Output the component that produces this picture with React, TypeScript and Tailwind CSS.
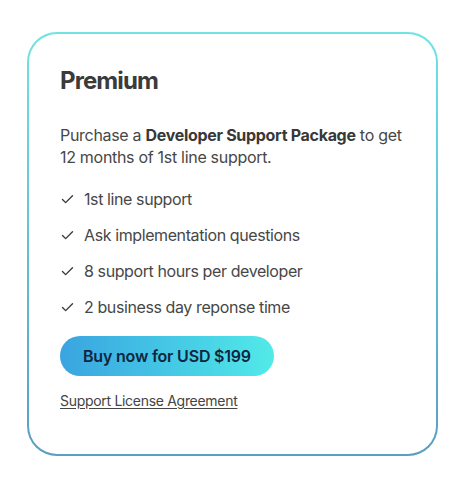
import { Check } from "lucide-react";

const features = [
  "1st line support",
  "Ask implementation questions",
  "8 support hours per developer",
  "2 business day reponse time",
];

export default function App() {
  return (
    <div className="h-[490px] w-[468px] bg-white pl-[27px] pt-[32px] font-['Inter',sans-serif]">
      <div className="h-[424px] w-[411px] rounded-[30px] bg-gradient-to-b from-[#6fe3e3] to-[#5a9ec3] p-[2px]">
        <div className="h-full w-full rounded-[28px] bg-white pl-[31px] pr-[20px] pt-[31px] tracking-[-0.3px] text-[#474747]">
          <h2 className="text-[24px] font-bold leading-8 tracking-[-0.9px] text-[#3b3b3b]">Premium</h2>

          <p className="mt-[27px] text-[16px] leading-[22px]">
            Purchase a <span className="font-bold text-[#383838]">Developer Support Package</span> to get 12
            months of 1st line support.
          </p>

          <ul className="mt-[19px] space-y-3">
            {features.map((item) => (
              <li key={item} className="flex items-center gap-[9px] text-[16px] leading-6 tracking-[-0.4px]">
                <Check className="h-[15px] w-[15px] shrink-0 text-[#3b3b3b]" strokeWidth={2.25} />
                {item}
              </li>
            ))}
          </ul>

          <button
            type="button"
            className="mt-[17px] flex h-10 items-center rounded-full bg-gradient-to-r from-[#3aa4e0] to-[#52eae8] px-[23px] text-[16px] font-semibold tracking-[-0.2px] text-[#10263f]"
          >
            Buy now for USD $199
          </button>

          <a href="#" className="mt-[15px] block w-fit text-[14px] leading-5 text-[#444] underline underline-offset-2">
            Support License Agreement
          </a>
        </div>
      </div>
    </div>
  );
}
